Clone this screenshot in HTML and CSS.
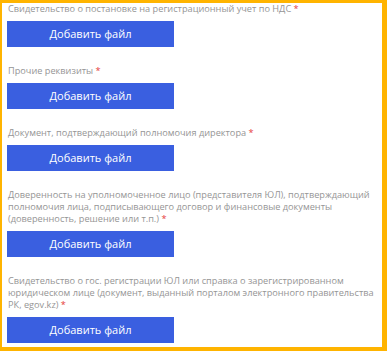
FILE: index.html
```html
<!DOCTYPE html>
<html lang="ru">
<head>
<meta charset="utf-8">
<link rel="stylesheet" href="styles.css">
</head>
<body>
<div class="frame">
  <div class="field">
    <div class="label">Свидетельство о постановке на регистрационный учет по НДС <span class="req">*</span></div>
    <button class="btn">Добавить файл</button>
  </div>
  <div class="field">
    <div class="label">Прочие реквизиты <span class="req">*</span></div>
    <button class="btn">Добавить файл</button>
  </div>
  <div class="field">
    <div class="label">Документ, подтверждающий полномочия директора <span class="req">*</span></div>
    <button class="btn">Добавить файл</button>
  </div>
  <div class="field">
    <div class="label">Доверенность на уполномоченное лицо (представителя ЮЛ), подтверждающий полномочия лица, подписывающего договор и финансовые документы (доверенность, решение или т.п.) <span class="req">*</span></div>
    <button class="btn">Добавить файл</button>
  </div>
  <div class="field">
    <div class="label">Свидетельство о гос. регистрации ЮЛ или справка о зарегистрированном юридическом лице (документ, выданный порталом электронного правительства РК, egov.kz) <span class="req">*</span></div>
    <button class="btn">Добавить файл</button>
  </div>
</div>
</body>
</html>
```

FILE: styles.css
```css
html, body {
  margin: 0;
  padding: 0;
  background: #ffffff;
}
.frame {
  box-sizing: border-box;
  width: 387px;
  height: 351px;
  border-style: solid;
  border-color: #ffb400;
  border-width: 3px 5px 4px 2px;
  padding: 0 5px 0 5px;
  display: flex;
  flex-direction: column;
  gap: 18.5px;
  font-family: "Open Sans", "Liberation Sans", sans-serif;
}
.field {
  display: flex;
  flex-direction: column;
  align-items: flex-start;
  gap: 5.5px;
}
.label {
  font-size: 9.2px;
  line-height: 12px;
  color: #959595;
  padding-left: 1px;
}
.req {
  color: #e53935;
}
.btn {
  width: 167px;
  height: 26px;
  border: 0;
  margin: 0;
  padding: 0;
  background: #3a5fe0;
  color: #ffffff;
  font-family: "Open Sans", "Liberation Sans", sans-serif;
  font-size: 11px;
  cursor: pointer;
}
```
